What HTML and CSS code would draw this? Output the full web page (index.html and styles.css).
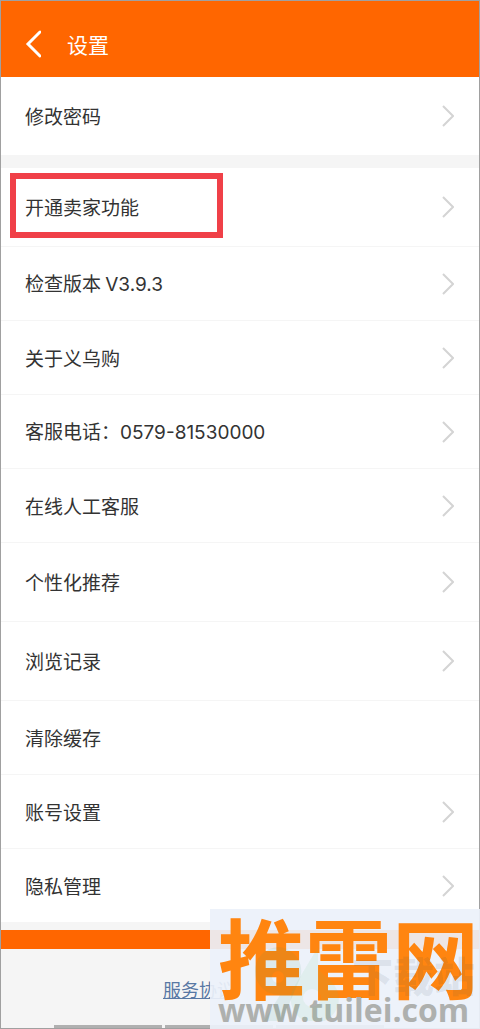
FILE: index.html
```html
<!DOCTYPE html>
<html lang="zh-CN">
<head>
<meta charset="utf-8">
<meta name="viewport" content="width=device-width, initial-scale=1">
<title>设置</title>
<link rel="stylesheet" href="styles.css">
</head>
<body>
<div class="screen">
  <header class="topbar">
    <button class="back" type="button" aria-label="返回">
      <svg width="16" height="28" viewBox="0 0 16 28"><path d="M15 2 3 14l12 12"/></svg>
    </button>
    <h1 class="title">设置</h1>
  </header>
  <main class="settings">
    <ul class="group">
      <li><a class="row tall" href="#"><span class="label">修改密码</span><svg class="chevron" viewBox="0 0 12 22"><path d="M1 1l10 10L1 21"/></svg></a></li>
    </ul>
    <ul class="group">
      <li><a class="row tall" href="#"><span class="label marked">开通卖家功能</span><svg class="chevron" viewBox="0 0 12 22"><path d="M1 1l10 10L1 21"/></svg></a></li>
      <li><a class="row" href="#"><span class="label">检查版本 <span class="latin">V3.9.3</span></span><svg class="chevron" viewBox="0 0 12 22"><path d="M1 1l10 10L1 21"/></svg></a></li>
      <li><a class="row" href="#"><span class="label">关于义乌购</span><svg class="chevron" viewBox="0 0 12 22"><path d="M1 1l10 10L1 21"/></svg></a></li>
      <li><a class="row" href="#"><span class="label">客服电话：<span class="latin">0579-81530000</span></span><svg class="chevron" viewBox="0 0 12 22"><path d="M1 1l10 10L1 21"/></svg></a></li>
      <li><a class="row" href="#"><span class="label">在线人工客服</span><svg class="chevron" viewBox="0 0 12 22"><path d="M1 1l10 10L1 21"/></svg></a></li>
      <li><a class="row tall" href="#"><span class="label">个性化推荐</span><svg class="chevron" viewBox="0 0 12 22"><path d="M1 1l10 10L1 21"/></svg></a></li>
      <li><a class="row tall" href="#"><span class="label">浏览记录</span><svg class="chevron" viewBox="0 0 12 22"><path d="M1 1l10 10L1 21"/></svg></a></li>
      <li><a class="row" href="#"><span class="label">清除缓存</span></a></li>
      <li><a class="row" href="#"><span class="label">账号设置</span><svg class="chevron" viewBox="0 0 12 22"><path d="M1 1l10 10L1 21"/></svg></a></li>
      <li><a class="row" href="#"><span class="label">隐私管理</span><svg class="chevron" viewBox="0 0 12 22"><path d="M1 1l10 10L1 21"/></svg></a></li>
    </ul>
  </main>
  <div class="accent"></div>
  <footer class="footer">
    <a class="terms" href="#">服务协议</a>
    <div class="tabs"><span></span><span></span><span></span></div>
  </footer>
  <aside class="watermark">
    <span class="brand">推雷网</span>
    <span class="site">www.tuilei.com</span>
    <svg class="ghost-logo" viewBox="0 0 110 74" aria-hidden="true">
      <path class="g1" fill-rule="evenodd" d="M26 0a24 24 0 1 0 2 48L12 74h18l16-38A24 24 0 0 0 26 0zm0 24a6 6 0 1 1 0 12 6 6 0 0 1 0-12z"/>
      <path class="g2" fill-rule="evenodd" d="M66 0 42 40a24 24 0 1 0 34-8L66 22zM60 42a9 9 0 1 1 0 18 9 9 0 0 1 0-18z"/>
    </svg>
    <span class="ghost">下载站</span>
  </aside>
</div>
</body>
</html>
```
FILE: styles.css
```css
* { box-sizing: border-box; }
body {
  margin: 0;
  background: #f5f5f5;
  color: #333;
  font-family: "Noto Sans CJK SC", sans-serif;
  font-size: 19px;
  line-height: 28px;
}
.screen {
  position: relative;
  display: flex;
  flex-direction: column;
  min-height: 100vh;
  border: 1px solid #a0a0a0;
}
.topbar {
  display: flex;
  align-items: center;
  gap: 26px;
  padding: 29px 24px 19px;
  background: #ff6600;
  color: #fff;
}
.back {
  display: flex;
  padding: 0;
  border: 0;
  background: none;
}
.back path {
  fill: none;
  stroke: #fff;
  stroke-width: 3;
  stroke-linecap: round;
}
.title {
  margin: 0;
  font-size: 21px;
  font-weight: 400;
  line-height: 28px;
}
.settings {
  display: flex;
  flex-direction: column;
  gap: 12px;
}
.group {
  margin: 0;
  padding: 0;
  list-style: none;
  background: #fff;
}
.row {
  display: flex;
  align-items: center;
  justify-content: space-between;
  min-height: 74px;
  padding: 0 25px 0 24px;
  border-bottom: 1px solid #f5f5f5;
  color: inherit;
  text-decoration: none;
}
.tall { min-height: 79px; }
.latin { font-family: Inter, sans-serif; }
.marked { position: relative; }
.marked::after {
  content: "";
  position: absolute;
  inset: -20px -84px -17px -15px;
  border: 6px solid #f04048;
}
.chevron {
  width: 12px;
  height: 22px;
  fill: none;
  stroke: #d4d4d4;
  stroke-width: 2;
}
.accent {
  height: 19px;
  margin-top: 7px;
  background: #ff6600;
}
.footer {
  display: flex;
  flex: 1;
  flex-direction: column;
  align-items: center;
  justify-content: space-between;
  padding-top: 26px;
}
.terms {
  width: 154px;
  color: #5878a4;
  font-size: 18px;
}
.tabs {
  display: flex;
  gap: 3px;
  width: 100%;
  padding: 0 95px 0 53px;
}
.tabs span {
  flex: 1;
  height: 3px;
  background: #b0b0b0;
}
.watermark {
  position: absolute;
  right: -1px;
  bottom: -1px;
  display: flex;
  flex-direction: column;
  width: 270px;
  height: 120px;
  padding-left: 8px;
  background: rgba(236, 241, 250, 0.92);
}
.brand {
  color: #ff8510;
  font-size: 87px;
  font-weight: 700;
  line-height: 92px;
  white-space: nowrap;
}
.site {
  color: #aeb0ae;
  font-family: "Open Sans", sans-serif;
  font-size: 32px;
  font-weight: 700;
  line-height: 18px;
}
.ghost {
  position: absolute;
  left: 142px;
  top: 41px;
  color: rgba(60, 80, 90, 0.1);
  font-size: 41px;
  font-weight: 900;
  line-height: 48px;
}
.ghost-logo {
  position: absolute;
  left: 42px;
  top: 38px;
  width: 110px;
  height: 74px;
}
.g1 { fill: rgba(60, 140, 100, 0.09); }
.g2 { fill: rgba(100, 200, 120, 0.09); }
```
